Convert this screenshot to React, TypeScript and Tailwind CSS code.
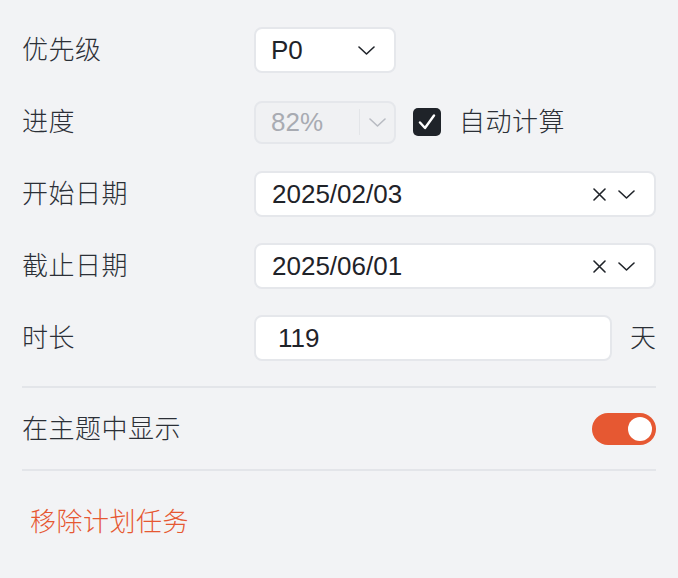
import React from "react";

const font = { fontFamily: '"Liberation Sans", "Noto Sans CJK SC", sans-serif' };

function Chevron({ className = "" }: { className?: string }) {
  return (
    <svg width="17" height="9" viewBox="0 0 17 9" className={className} fill="none">
      <path d="M1 1 L8.5 8 L16 1" stroke="currentColor" strokeWidth="1.6" strokeLinecap="round" strokeLinejoin="round" />
    </svg>
  );
}

function Cross() {
  return (
    <svg width="13" height="13" viewBox="0 0 13 13" fill="none">
      <path d="M1 1 L12 12 M12 1 L1 12" stroke="currentColor" strokeWidth="1.6" strokeLinecap="round" />
    </svg>
  );
}

function Label({ children }: { children: React.ReactNode }) {
  return <div className="w-[232px] shrink-0 text-[26px] leading-[30px] font-light tracking-[0.5px] text-[#2b2f36]">{children}</div>;
}

export default function App() {
  return (
    <div className="w-[678px] h-[578px] bg-[#f2f3f5] px-[22px] pt-[27px]" style={font}>
      <div className="flex flex-col gap-[26px]">
        <div className="flex items-center h-[46px]">
          <Label>优先级</Label>
          <div className="w-[142px] h-[46px] bg-white border-2 border-[#e5e7eb] rounded-[8px] flex items-center pl-[15px] pr-[19px] justify-between">
            <span className="text-[26px] text-[#1f2329]">P0</span>
            <Chevron className="text-[#1f2329]" />
          </div>
        </div>
        <div className="flex items-center h-[46px]">
          <Label>进度</Label>
          <div className="w-[142px] h-[43px] bg-[#f0f1f3] border-2 border-[#e5e7eb] rounded-[8px] flex items-center pl-[15px]">
            <span className="text-[26px] text-[#a8abb2] flex-1">82%</span>
            <div className="w-[1px] h-[26px] bg-[#e3e5e8]" />
            <div className="w-[34px] flex justify-center">
              <Chevron className="text-[#b8bbc2]" />
            </div>
          </div>
          <div className="ml-[17px] w-[28px] h-[28px] rounded-[5px] bg-[#1f2329] flex items-center justify-center">
            <svg width="18" height="16" viewBox="0 0 18 16" fill="none">
              <path d="M2 8.5 L7 14 L16 1.5" stroke="white" strokeWidth="2.4" strokeLinecap="round" strokeLinejoin="round" />
            </svg>
          </div>
          <span className="ml-[18px] text-[26px] leading-[30px] font-light tracking-[0.5px] text-[#2b2f36]">自动计算</span>
        </div>
        <div className="flex items-center h-[46px]">
          <Label>开始日期</Label>
          <div className="flex-1 h-[46px] bg-white border-2 border-[#e5e7eb] rounded-[8px] flex items-center pl-[16px] pr-[19px]">
            <span className="text-[26px] text-[#1f2329] flex-1">2025/02/03</span>
            <span className="text-[#1f2329] flex items-center"><Cross /></span>
            <Chevron className="text-[#1f2329] ml-[12px]" />
          </div>
        </div>
        <div className="flex items-center h-[46px]">
          <Label>截止日期</Label>
          <div className="flex-1 h-[46px] bg-white border-2 border-[#e5e7eb] rounded-[8px] flex items-center pl-[16px] pr-[19px]">
            <span className="text-[26px] text-[#1f2329] flex-1">2025/06/01</span>
            <span className="text-[#1f2329] flex items-center"><Cross /></span>
            <Chevron className="text-[#1f2329] ml-[12px]" />
          </div>
        </div>
        <div className="flex items-center h-[46px]">
          <Label>时长</Label>
          <div className="w-[360px] h-[46px] bg-white border-2 border-[#e5e7eb] rounded-[8px] flex items-center pl-[22px]">
            <span className="text-[26px] text-[#1f2329]">119</span>
          </div>
          <span className="ml-[18px] text-[26px] leading-[30px] font-light text-[#2b2f36]">天</span>
        </div>
      </div>
      <div className="mt-[25px] h-[2px] bg-[#e3e5e9]" />
      <div className="h-[81px] flex items-center justify-between">
        <span className="text-[26px] leading-[30px] font-light tracking-[0.5px] text-[#2b2f36]">在主题中显示</span>
        <div className="w-[64px] h-[32px] rounded-full bg-[#e65832] flex items-center justify-end pr-[4px]">
          <div className="w-[24px] h-[24px] rounded-full bg-white" />
        </div>
      </div>
      <div className="h-[2px] bg-[#e3e5e9]" />
      <div className="pt-[36px] pl-[8px] text-[26px] leading-[30px] font-light tracking-[0.5px] text-[#e65832]">移除计划任务</div>
    </div>
  );
}
